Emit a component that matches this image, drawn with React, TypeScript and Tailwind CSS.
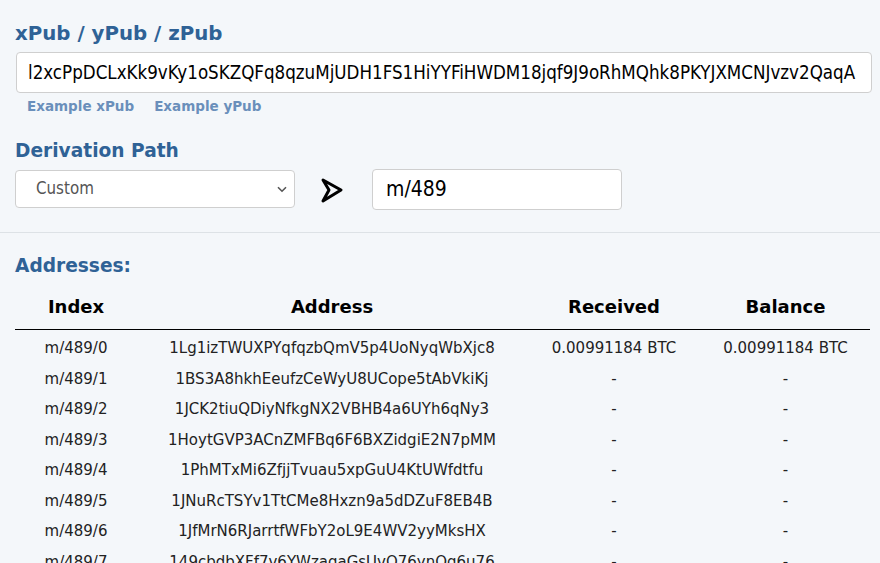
import React from "react";

const rows: [string, string, string, string][] = [
  ["m/489/0", "1Lg1izTWUXPYqfqzbQmV5p4UoNyqWbXjc8", "0.00991184 BTC", "0.00991184 BTC"],
  ["m/489/1", "1BS3A8hkhEeufzCeWyU8UCope5tAbVkiKj", "-", "-"],
  ["m/489/2", "1JCK2tiuQDiyNfkgNX2VBHB4a6UYh6qNy3", "-", "-"],
  ["m/489/3", "1HoytGVP3ACnZMFBq6F6BXZidgiE2N7pMM", "-", "-"],
  ["m/489/4", "1PhMTxMi6ZfjjTvuau5xpGuU4KtUWfdtfu", "-", "-"],
  ["m/489/5", "1JNuRcTSYv1TtCMe8Hxzn9a5dDZuF8EB4B", "-", "-"],
  ["m/489/6", "1JfMrN6RJarrtfWFbY2oL9E4WV2yyMksHX", "-", "-"],
  ["m/489/7", "149cbdbXFf7v6YWzagaGsUvQ76ynQq6u76", "-", "-"],
  ["m/489/8", "1KxwTnhzS9BMfDxVwRhZcYAuoSUmnLmn2P", "-", "-"],
];

const cond = { fontFamily: "'DejaVu Sans Condensed', 'DejaVu Sans', sans-serif" };

export default function App() {
  return (
    <div
      className="min-h-screen w-full overflow-hidden bg-[#f4f7fa] text-[#222]"
      style={{ fontFamily: "'DejaVu Sans', Verdana, sans-serif" }}
    >
      <div className="px-[15px] pt-[22px]">
        <h2 className="text-[19.8px] leading-[24px] font-bold text-[#2f6296]">xPub / yPub / zPub</h2>
        <div className="mt-[6px] ml-px flex h-[41px] w-[856px] items-center overflow-hidden whitespace-nowrap rounded-[4px] border border-[#cfcfcf] bg-white pl-[11px]">
          <span className="text-[18.6px] text-black" style={cond}>
            l2xcPpDCLxKk9vKy1oSKZQFq8qzuMjUDH1FS1HiYYFiHWDM18jqf9J9oRhMQhk8PKYJXMCNJvzv2QaqA
          </span>
        </div>
        <div className="mt-[5px] flex gap-[20px] pl-[12px] text-[13.5px] leading-[16px] font-bold text-[#6a8fbb]">
          <span>Example xPub</span>
          <span>Example yPub</span>
        </div>
        <h2 className="mt-[25px] text-[18.6px] leading-[24px] font-bold text-[#2f6296]">Derivation Path</h2>
        <div className="mt-[6px] flex h-[41px] items-start">
          <div className="mt-px flex h-[38px] w-[280px] items-center justify-between rounded-[4px] border border-[#cfcfcf] bg-white pl-[20px] pr-[7px]">
            <span className="text-[16.8px] text-[#555]" style={cond}>Custom</span>
            <svg width="10" height="7" viewBox="0 0 10 7" fill="none">
              <path d="M1 1.2 L5 5.2 L9 1.2" stroke="#555" strokeWidth="1.6" />
            </svg>
          </div>
          <div className="flex h-[41px] w-[77px] items-center justify-center pr-[6px]">
            <svg width="26" height="28" viewBox="0 0 26 28" fill="none">
              <path d="M5 4 L23 14 L5 25 L11 14 Z" stroke="#000" strokeWidth="3" strokeLinejoin="round" />
            </svg>
          </div>
          <div className="flex h-[41px] w-[250px] items-center rounded-[4px] border border-[#cfcfcf] bg-white pl-[13px]">
            <span className="text-[21px] text-black" style={cond}>m/489</span>
          </div>
        </div>
      </div>
      <div className="mt-[22px] border-t border-[#dde2e6]" />
      <div className="px-[15px]">
        <h2 className="mt-[21px] text-[18.6px] leading-[24px] font-bold text-[#2f6296]">Addresses:</h2>
        <div className="mt-[5px] w-[855px]">
          <div className="flex h-[47px] items-center border-b border-black text-[18px] font-bold text-black">
            <div className="w-[122px] text-center">Index</div>
            <div className="w-[390px] text-center">Address</div>
            <div className="w-[174px] text-center">Received</div>
            <div className="w-[169px] text-center">Balance</div>
          </div>
          <div className="pt-[3px]">
            {rows.map((r) => (
              <div key={r[0]} className="flex h-[30.5px] items-center text-[15px] text-[#222]">
                <div className="w-[122px] text-center">{r[0]}</div>
                <div className="w-[390px] text-center">{r[1]}</div>
                <div className="w-[174px] text-center">{r[2]}</div>
                <div className="w-[169px] text-center">{r[3]}</div>
              </div>
            ))}
          </div>
        </div>
      </div>
    </div>
  );
}
